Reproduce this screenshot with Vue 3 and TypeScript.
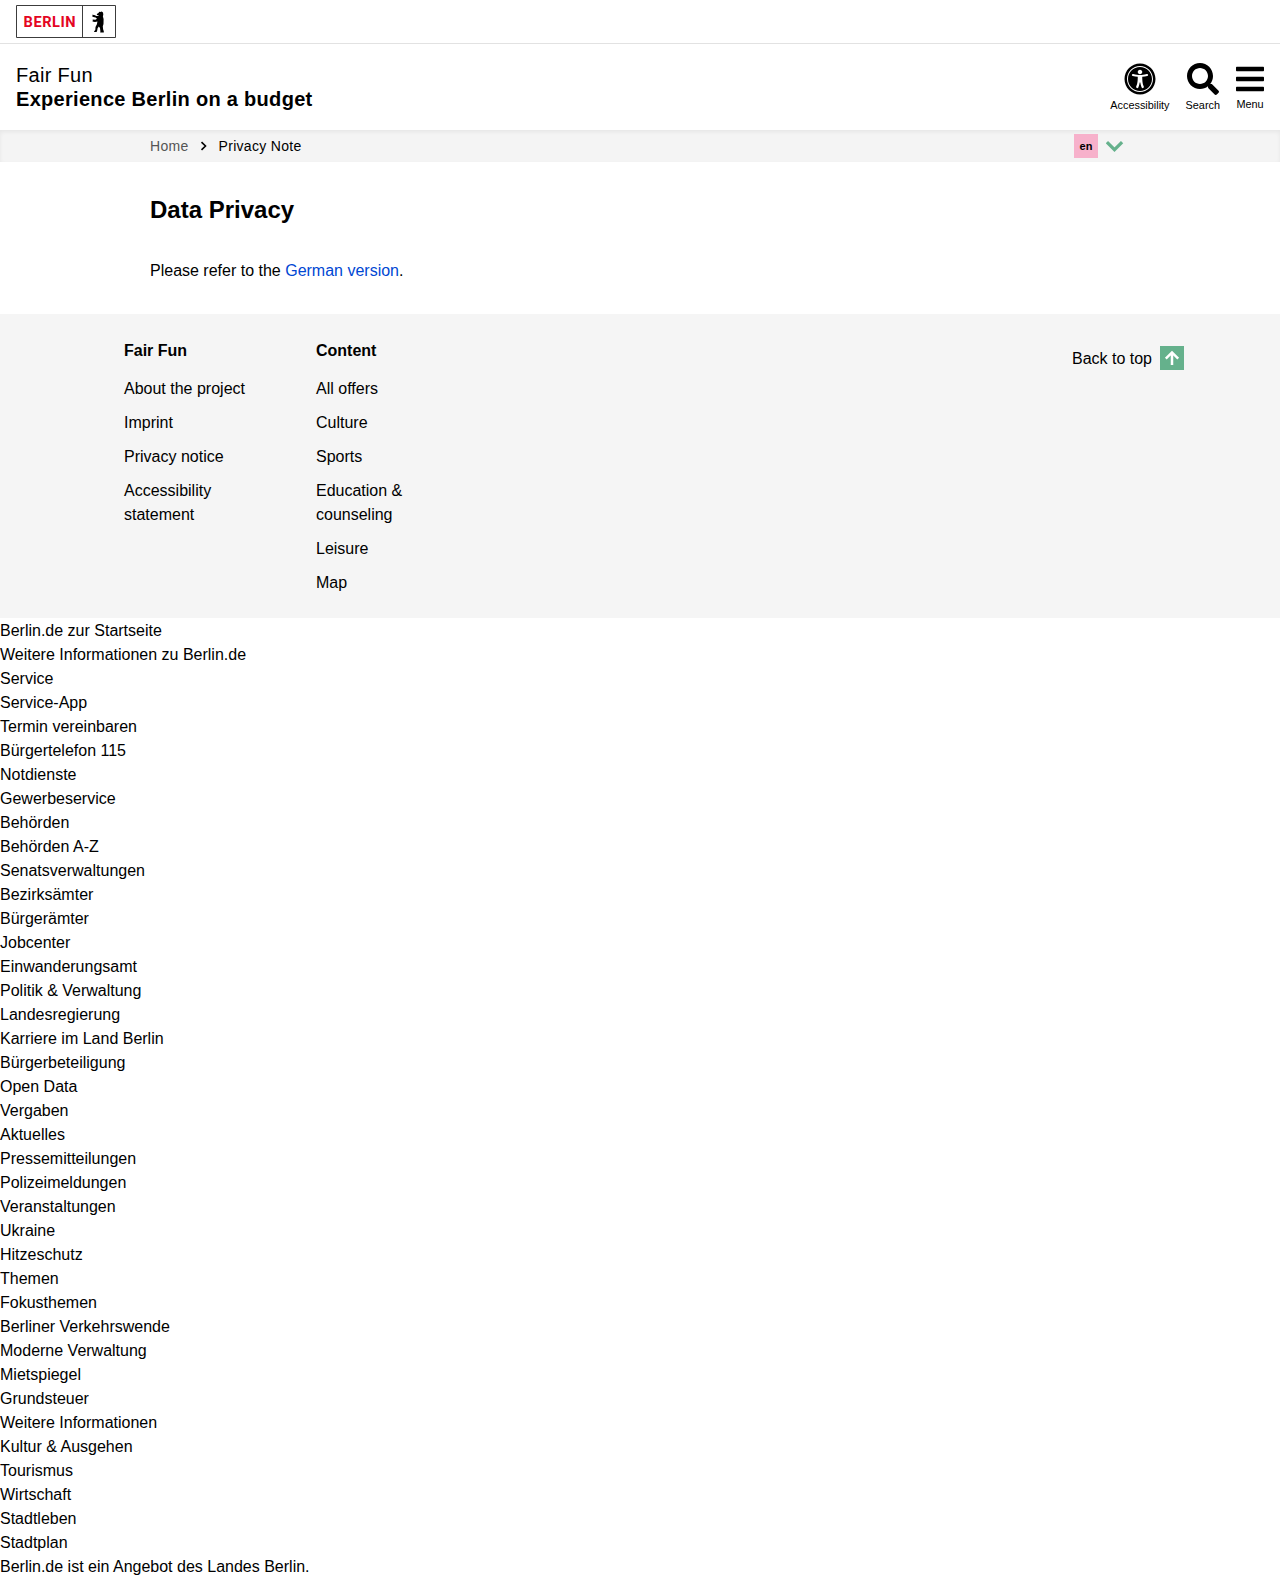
<script setup lang="ts">
interface FooterColumn {
  title: string
  links: string[]
}

const footerColumns: FooterColumn[] = [
  { title: 'Fair Fun', links: ['About the project', 'Imprint', 'Privacy notice', 'Accessibility statement'] },
  { title: 'Content', links: ['All offers', 'Culture', 'Sports', 'Education & counseling', 'Leisure', 'Map'] },
]

const portalLinks: string[] = [
  'Berlin.de zur Startseite',
  'Weitere Informationen zu Berlin.de',
  'Service',
  'Service-App',
  'Termin vereinbaren',
  'Bürgertelefon 115',
  'Notdienste',
  'Gewerbeservice',
  'Behörden',
  'Behörden A-Z',
  'Senatsverwaltungen',
  'Bezirksämter',
  'Bürgerämter',
  'Jobcenter',
  'Einwanderungsamt',
  'Politik & Verwaltung',
  'Landesregierung',
  'Karriere im Land Berlin',
  'Bürgerbeteiligung',
  'Open Data',
  'Vergaben',
  'Aktuelles',
  'Pressemitteilungen',
  'Polizeimeldungen',
  'Veranstaltungen',
  'Ukraine',
  'Hitzeschutz',
  'Themen',
  'Fokusthemen',
  'Berliner Verkehrswende',
  'Moderne Verwaltung',
  'Mietspiegel',
  'Grundsteuer',
  'Weitere Informationen',
  'Kultur & Ausgehen',
  'Tourismus',
  'Wirtschaft',
  'Stadtleben',
  'Stadtplan',
  'Berlin.de ist ein Angebot des Landes Berlin.',
]
</script>

<template>
  <div class="page">
    <div class="portal-bar">
      <svg class="logo" width="100" height="34" viewBox="0 0 100 34">
        <path d="M.5 .5H99.5V32.5H.5ZM66.5 .5V32.5" fill="none" stroke="#3c3c3c" stroke-width="1" />
        <text x="7.6" y="21.8" class="logo-text" textLength="52" lengthAdjust="spacing">BERLIN</text>
        <path
          d="M83.2 6.8L84.3 7.1 85.7 6.6 87 7.5 87.3 9.5 86.9 11.5 87.6 14 87.5 19 86.8 21.2 87.1 24.3 87.8 26.2V27.4H84.2L84.4 26.2 84 23 82.8 21.6 81.6 23.3 81.2 25.6 80.6 27H77.9L78.6 25.7 79.3 25 79.5 22 81 19 81.4 16.6 79 17 77.4 16.7 76.1 16 77 15.4 76.6 14.6 79.4 14.7 81 13.7 79.6 12.6 77.4 12.1 76 11.2 76.7 10.7 76 9.8 78.2 10.1 80.5 11.1 82.3 11.1 82.9 10.5 81 9.9 80.8 9 82.5 8.1Z"
          fill="#000"
        />
      </svg>
    </div>

    <header class="header">
      <div class="brand">
        <div>Fair Fun</div>
        <div class="claim">Experience Berlin on a budget</div>
      </div>
      <nav class="tools">
        <a class="tool">
          <svg width="32" height="32" viewBox="0 0 512 512"><path d="M256 48c114.953 0 208 93.029 208 208 0 114.953-93.029 208-208 208-114.953 0-208-93.029-208-208 0-114.953 93.029-208 208-208m0-40C119.033 8 8 119.033 8 256s111.033 248 248 248 248-111.033 248-248S392.967 8 256 8zm0 56C149.961 64 64 149.961 64 256s85.961 192 192 192 192-85.961 192-192S362.039 64 256 64zm0 44c19.882 0 36 16.118 36 36s-16.118 36-36 36-36-16.118-36-36 16.118-36 36-36zm117.741 98.023c-28.712 6.779-55.511 12.748-82.14 15.807.851 101.023 12.306 123.052 25.037 155.621 3.617 9.26-.957 19.698-10.217 23.315-9.261 3.617-19.699-.957-23.316-10.217-8.705-22.308-17.086-40.636-22.261-78.549h-9.686c-5.167 37.851-13.534 56.208-22.262 78.549-3.615 9.255-14.05 13.836-23.315 10.217-9.26-3.617-13.834-14.056-10.217-23.315 12.713-32.541 24.185-54.541 25.037-155.621-26.629-3.058-53.428-9.027-82.141-15.807-8.6-2.031-13.926-10.648-11.895-19.249s10.647-13.926 19.249-11.895c96.686 22.829 124.283 22.783 220.775 0 8.599-2.03 17.218 3.294 19.249 11.895 2.029 8.601-3.297 17.219-11.897 19.249z" /></svg>
          <span>Accessibility</span>
        </a>
        <a class="tool">
          <svg width="32" height="32" viewBox="0 0 512 512"><path d="M505 442.7L405.3 343c-4.5-4.5-10.6-7-17-7H372c27.6-35.3 44-79.7 44-128C416 93.1 322.9 0 208 0S0 93.1 0 208s93.1 208 208 208c48.3 0 92.7-16.4 128-44v16.3c0 6.4 2.5 12.5 7 17l99.7 99.7c9.4 9.4 24.6 9.4 33.9 0l28.3-28.3c9.4-9.4 9.4-24.6.1-34zM208 336c-70.7 0-128-57.2-128-128 0-70.7 57.2-128 128-128 70.7 0 128 57.2 128 128 0 70.7-57.2 128-128 128z" /></svg>
          <span>Search</span>
        </a>
        <a class="tool menu">
          <svg width="28" height="32" viewBox="0 0 448 512"><path d="M16 132h416c8.837 0 16-7.163 16-16V76c0-8.837-7.163-16-16-16H16C7.163 60 0 67.163 0 76v40c0 8.837 7.163 16 16 16zm0 160h416c8.837 0 16-7.163 16-16v-40c0-8.837-7.163-16-16-16H16c-8.837 0-16 7.163-16 16v40c0 8.837 7.163 16 16 16zm0 160h416c8.837 0 16-7.163 16-16v-40c0-8.837-7.163-16-16-16H16c-8.837 0-16 7.163-16 16v40c0 8.837 7.163 16 16 16z" /></svg>
          <span>Menu</span>
        </a>
      </nav>
    </header>

    <div class="crumb-bar">
      <nav class="crumbs">
        <a class="home">Home</a>
        <svg class="sep" width="8" height="10" viewBox="0 0 8 10"><path d="M1.5 1.2L5.5 5 1.5 8.8" fill="none" stroke="#000" stroke-width="1.6" /></svg>
        <span>Privacy Note</span>
      </nav>
      <div class="lang">
        <span class="lang-code">en</span>
        <svg width="18" height="12" viewBox="0 0 18 12"><path d="M.9 2.1L8.5 9.7 16.1 2.1" fill="none" stroke="#65b18c" stroke-width="3.2" /></svg>
      </div>
    </div>

    <main class="content">
      <h1>Data Privacy</h1>
      <p>Please refer to the <a class="link">German version</a>.</p>
    </main>

    <footer class="footer">
      <div class="columns">
        <section v-for="column in footerColumns" :key="column.title" class="column">
          <h2>{{ column.title }}</h2>
          <ul>
            <li v-for="link in column.links" :key="link">{{ link }}</li>
          </ul>
        </section>
      </div>
      <a class="to-top">
        <span>Back to top</span>
        <svg width="24" height="24" viewBox="0 0 24 24">
          <rect width="24" height="24" fill="#65b18c" />
          <path d="M12 19V6.5M5.8 12.6L12 6.4 18.2 12.6" fill="none" stroke="#fff" stroke-width="2.5" />
        </svg>
      </a>
    </footer>

    <ul class="portal-links">
      <li v-for="item in portalLinks" :key="item">{{ item }}</li>
    </ul>
  </div>
</template>

<style>
body {
  background: #fff;
}
</style>

<style scoped>
.page {
  font: 16px/24px "Liberation Sans", Arial, sans-serif;
  color: #000;
}
ul {
  list-style: none;
  margin: 0;
  padding: 0;
}
h1,
h2,
p {
  margin: 0;
}
svg {
  display: block;
}
.portal-bar {
  box-sizing: border-box;
  height: 44px;
  padding: 5px 16px 0;
  border-bottom: 1px solid #e2e2e2;
}
.logo-text {
  font: 700 14.6px Roboto, sans-serif;
  fill: #e40422;
}
.header {
  box-sizing: border-box;
  height: 86px;
  padding: 19px 16px 0;
  display: flex;
  justify-content: space-between;
}
.brand {
  font-size: 20px;
  letter-spacing: 0.3px;
}
.claim {
  font-weight: 700;
}
.tools {
  display: flex;
  gap: 16px;
}
.tool {
  display: flex;
  flex-direction: column;
  align-items: center;
  font-size: 10.88px;
  line-height: 20px;
}
.menu {
  line-height: 18px;
}
.crumb-bar {
  box-sizing: border-box;
  height: 32px;
  padding: 0 156px 0 150px;
  background: #f4f4f4;
  box-shadow: inset 0 2px 4px rgba(0, 0, 0, 0.06);
  display: flex;
  align-items: center;
  justify-content: space-between;
}
.crumbs {
  display: flex;
  align-items: center;
  font-size: 14px;
  letter-spacing: 0.3px;
}
.home {
  color: #555;
}
.sep {
  margin: 0 11px;
}
.lang {
  display: flex;
  align-items: center;
  gap: 8px;
}
.lang-code {
  width: 24px;
  height: 24px;
  background: #f7b1cb;
  font-size: 11px;
  font-weight: 700;
  text-align: center;
}
.content {
  padding: 32px 150px 31px;
}
h1 {
  font-size: 24px;
  line-height: 32px;
  margin-bottom: 33px;
}
.link {
  color: #0047d3;
}
.footer {
  box-sizing: border-box;
  height: 304px;
  padding: 25px 96px 0 124px;
  background: #f5f5f5;
  display: flex;
  justify-content: space-between;
}
.columns {
  display: flex;
  gap: 64px;
}
.column {
  width: 128px;
}
h2 {
  font-size: 16px;
  line-height: 24px;
  margin-bottom: 14px;
}
.column li {
  margin-bottom: 10px;
}
.to-top {
  display: flex;
  gap: 8px;
  height: 24px;
  margin-top: 7px;
}
.to-top span {
  padding-top: 1px;
}
.portal-links {
  box-sizing: border-box;
  height: 960px;
  padding-top: 1px;
  overflow: hidden;
}
</style>
